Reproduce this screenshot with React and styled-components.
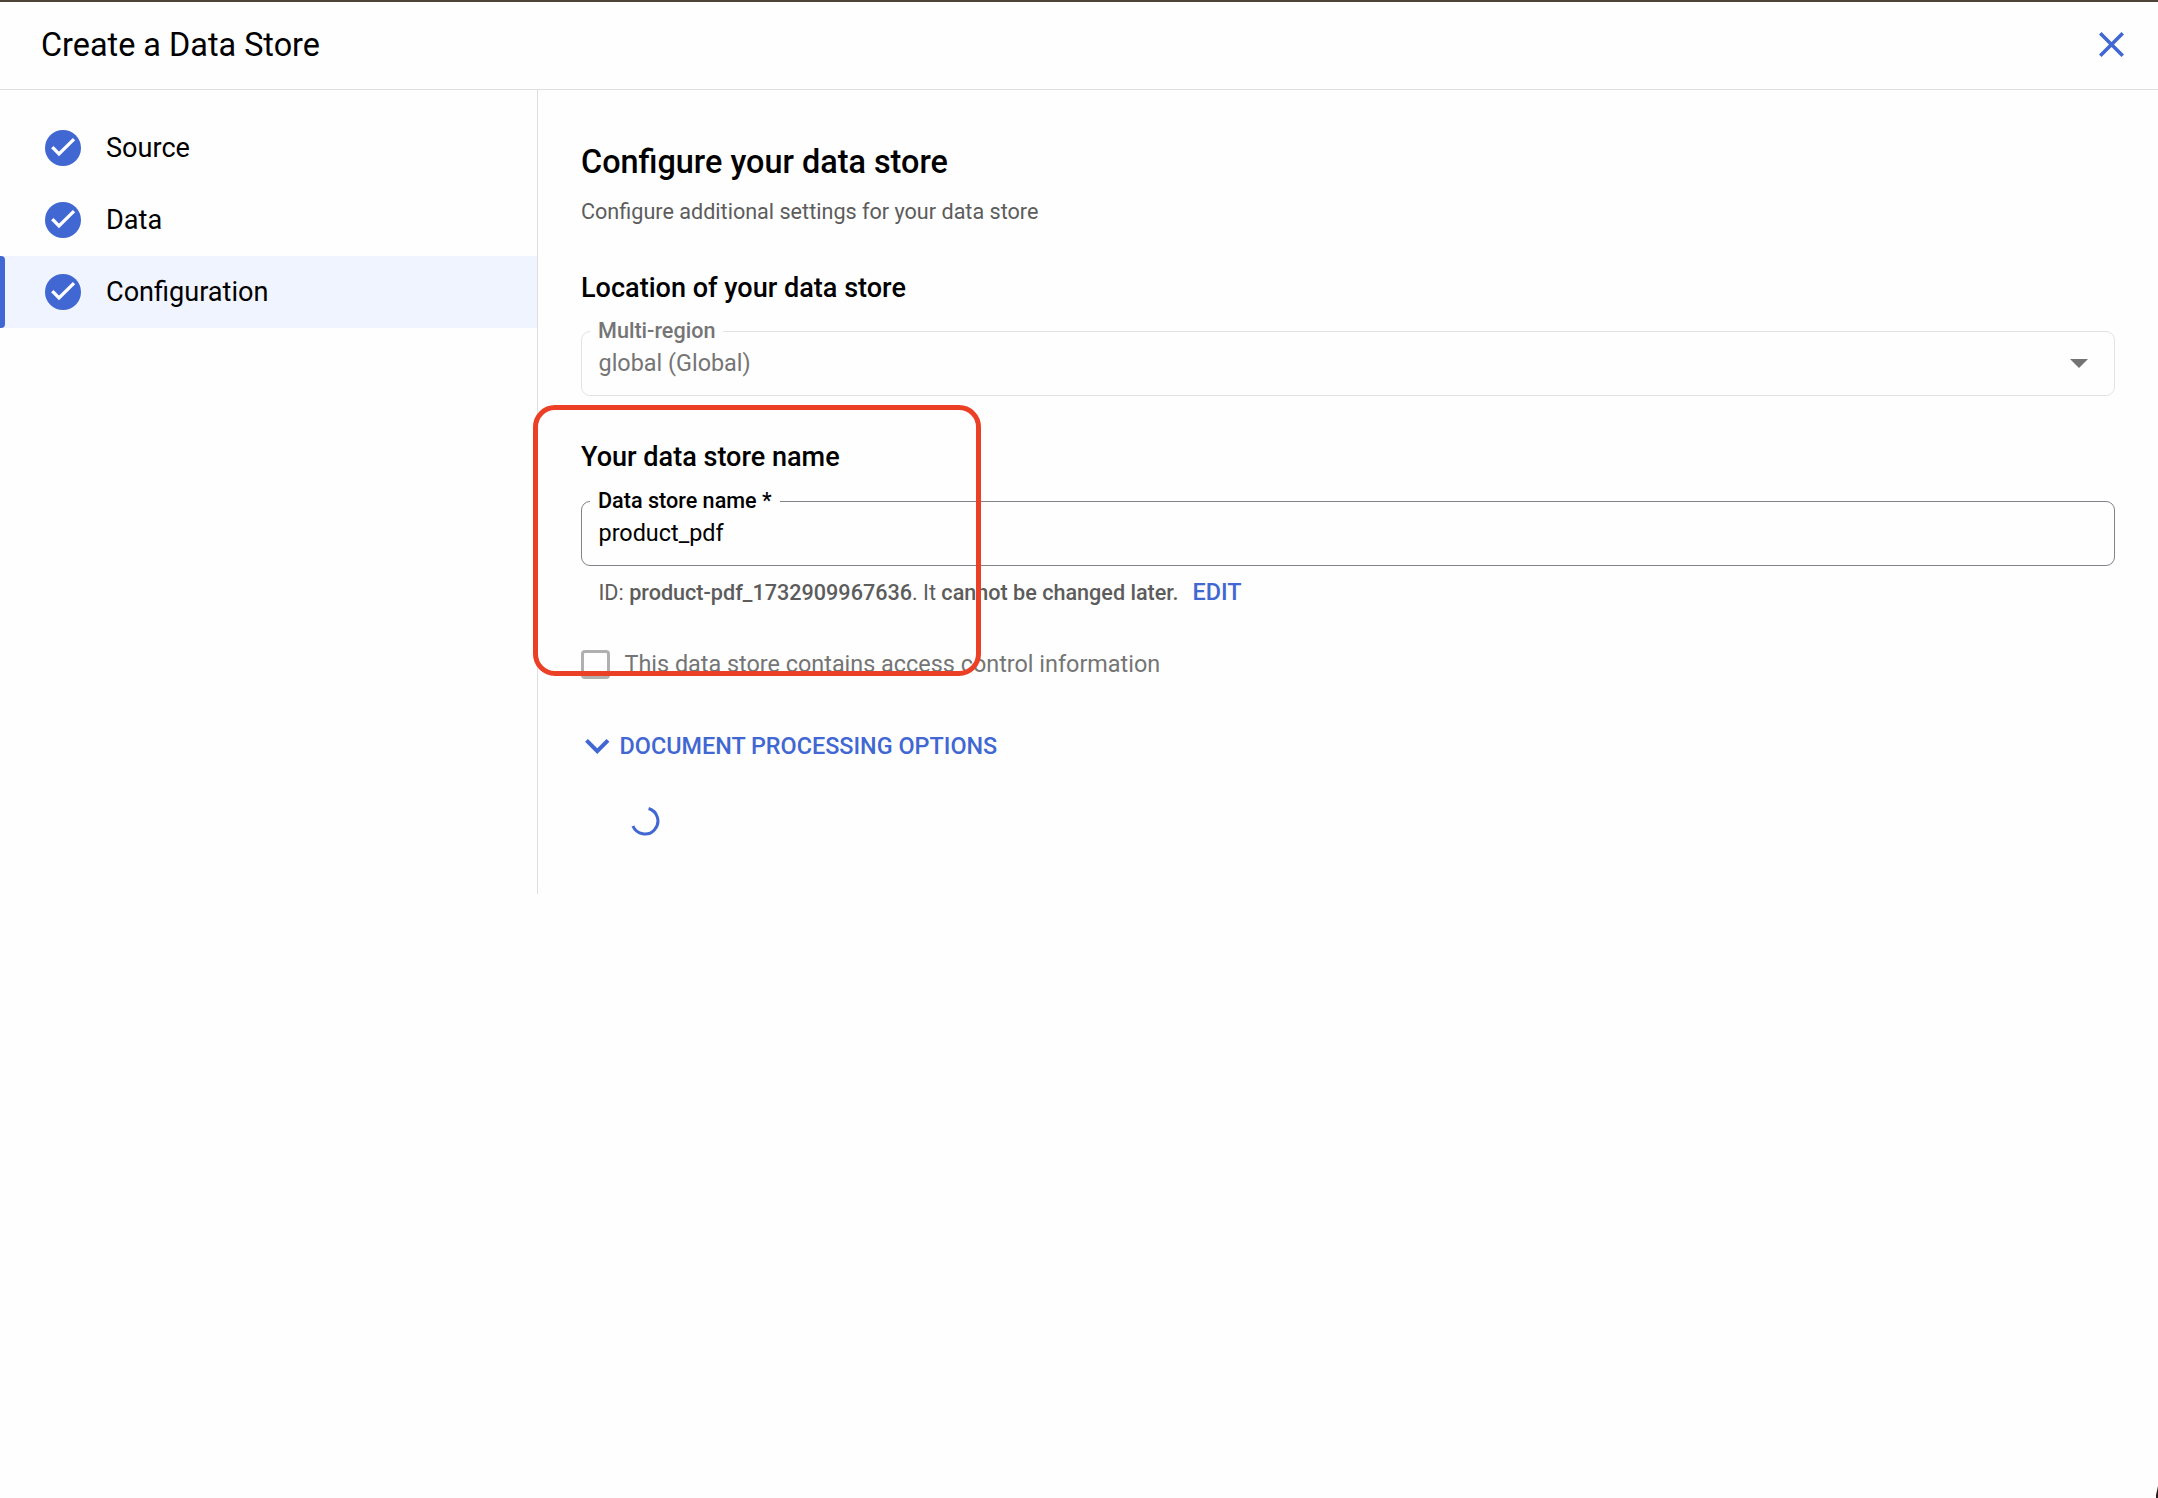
import React from "react";
import styled, { createGlobalStyle, css } from "styled-components";

const color = {
  page: "#fefefe",
  blue: "#4067d2",
  selected: "#f0f4fe",
  line: "#dedede",
  text: "#000",
  muted: "#5c5c5c",
  disabled: "#757575",
  frame: "#4f443a",
  highlight: "#eb4026",
};

const GlobalStyle = createGlobalStyle`
  *, *::before, *::after { box-sizing: border-box; }
  body {
    margin: 0;
    background: ${color.page};
    color: ${color.text};
    font-family: Roboto, "Liberation Sans", sans-serif;
  }
  h1, h2, h3, p { margin: 0; }
  svg { display: block; flex: none; }
`;

const Page = styled.div`
  position: relative;
  height: 1498px;
  overflow: hidden;
  border-top: 2px solid ${color.frame};
`;

const Header = styled.header`
  display: flex;
  align-items: center;
  justify-content: space-between;
  height: 88px;
  padding: 0 34px 2px 41px;
  border-bottom: 1px solid ${color.line};
`;

const Title = styled.h1`
  padding-top: 2px;
  font-size: 32.4px;
  font-weight: 400;
  line-height: 41px;
`;

const IconButton = styled.button`
  padding: 0;
  border: 0;
  background: none;
  color: ${color.blue};
`;

const Body = styled.div`
  display: flex;
  height: 804px;
`;

const Sidebar = styled.nav`
  flex: none;
  width: 538px;
  padding-top: 22px;
  border-right: 1px solid ${color.line};
`;

const Step = styled.a`
  display: flex;
  align-items: center;
  gap: 25px;
  height: 72px;
  padding-left: 45px;
  font-size: 27.1px;
  line-height: 36px;
  ${(p) =>
    p.$active &&
    css`
      position: relative;
      background: ${color.selected};
      &::before {
        content: "";
        position: absolute;
        inset: 0 auto 0 0;
        width: 5px;
        border-radius: 0 4px 4px 0;
        background: ${color.blue};
      }
    `}
`;

const Main = styled.main`
  flex: 1;
  display: flex;
  flex-direction: column;
  padding: 52px 43px 0;
`;

const Heading = styled.h2`
  font-size: 32.4px;
  font-weight: 500;
  line-height: 40px;
`;

const Subtitle = styled.p`
  margin-top: 15px;
  font-size: 21.6px;
  line-height: 30px;
  color: ${color.muted};
`;

const SectionTitle = styled.h3`
  margin-top: 45px;
  font-size: 27.05px;
  font-weight: 500;
  line-height: 32px;
`;

const Field = styled.div`
  position: relative;
  display: flex;
  align-items: center;
  justify-content: space-between;
  height: 65px;
  margin-top: ${(p) => (p.$disabled ? 27 : 28)}px;
  padding: 0 26px 1px 16.5px;
  border: 1px solid ${(p) => (p.$disabled ? "#e3e3e5" : "#808387")};
  border-radius: 9px;
  color: ${(p) => (p.$disabled ? color.disabled : color.text)};
  font-size: 23.4px;
  line-height: 30px;
`;

const FieldLabel = styled.label`
  position: absolute;
  top: -14px;
  left: 8px;
  padding: 0 8px;
  background: ${color.page};
  font-size: 21.6px;
  font-weight: 500;
  line-height: 26px;
`;

const Hint = styled.div`
  display: flex;
  align-items: baseline;
  gap: 14px;
  height: 31px;
  margin-top: 11px;
  padding-left: 17.5px;
  color: ${color.muted};
  font-size: 21.6px;
  line-height: 30px;
  b { font-weight: 500; }
`;

const LinkButton = styled.button`
  padding: 0;
  border: 0;
  background: none;
  color: ${color.blue};
  font: 500 23.4px/30px Roboto, "Liberation Sans", sans-serif;
`;

const CheckRow = styled.label`
  display: flex;
  gap: 14.5px;
  margin-top: 42px;
  color: ${color.disabled};
  font-size: 23.4px;
  line-height: 28px;
`;

const Box = styled.span`
  width: 29px;
  height: 29px;
  border: 3px solid #b0b0b0;
  border-radius: 4px;
`;

const Expander = styled.div`
  display: flex;
  align-items: center;
  gap: 10px;
  margin-top: 52px;
  padding-left: 4px;
  color: ${color.blue};
`;

const SpinnerSlot = styled.div`
  margin-top: 45px;
  padding-left: 49.3px;
  color: ${color.blue};
`;

const Highlight = styled.div`
  position: absolute;
  left: 533px;
  top: 403px;
  width: 448px;
  height: 271px;
  border: 5px solid ${color.highlight};
  border-radius: 22px;
`;

const Corner = styled.svg`
  position: absolute;
  right: 0;
  bottom: 0;
`;

const CheckCircle = () => (
  <svg width="36" height="36" viewBox="0 0 36 36">
    <circle cx="18" cy="18" r="18" fill={color.blue} />
    <path d="M7.3 17.2 14 24 29 9.2" fill="none" stroke="#fff" strokeWidth="3.3" />
  </svg>
);

const CloseIcon = () => (
  <svg width="25" height="25" viewBox="5 5 14 14" fill="currentColor">
    <path d="M19 6.41 17.59 5 12 10.59 6.41 5 5 6.41 10.59 12 5 17.59 6.41 19 12 13.41 17.59 19 19 17.59 13.41 12z" />
  </svg>
);

const CaretIcon = () => (
  <svg width="18" height="9" viewBox="0 0 18 9" fill="#737373">
    <path d="M0 0h18L9 9z" />
  </svg>
);

const ChevronIcon = () => (
  <svg width="24.5" height="15" viewBox="6 8.59 12 7.41" fill="currentColor">
    <path d="M16.59 8.59 12 13.17 7.41 8.59 6 10l6 6 6-6z" />
  </svg>
);

const Spinner = () => (
  <svg width="30" height="30" viewBox="-15 -15 30 30">
    <path d="M3.6-12.5A13 13 0 1 1-12.1 5" fill="none" stroke="currentColor" strokeWidth="3" />
  </svg>
);

const steps = ["Source", "Data", "Configuration"];

export default function App() {
  return (
    <Page>
      <GlobalStyle />
      <Header>
        <Title>Create a Data Store</Title>
        <IconButton aria-label="Close">
          <CloseIcon />
        </IconButton>
      </Header>
      <Body>
        <Sidebar>
          {steps.map((name) => (
            <Step key={name} $active={name === "Configuration"}>
              <CheckCircle />
              {name}
            </Step>
          ))}
        </Sidebar>
        <Main>
          <Heading>Configure your data store</Heading>
          <Subtitle>Configure additional settings for your data store</Subtitle>

          <SectionTitle>Location of your data store</SectionTitle>
          <Field $disabled>
            <FieldLabel>Multi-region</FieldLabel>
            global (Global)
            <CaretIcon />
          </Field>

          <SectionTitle>Your data store name</SectionTitle>
          <Field>
            <FieldLabel>Data store name *</FieldLabel>
            product_pdf
          </Field>
          <Hint>
            <span>
              ID: <b>product-pdf_1732909967636</b>. It <b>cannot be changed later.</b>
            </span>
            <LinkButton>EDIT</LinkButton>
          </Hint>

          <CheckRow>
            <Box />
            This data store contains access control information
          </CheckRow>

          <Expander>
            <ChevronIcon />
            <LinkButton>DOCUMENT PROCESSING OPTIONS</LinkButton>
          </Expander>
          <SpinnerSlot>
            <Spinner />
          </SpinnerSlot>
        </Main>
      </Body>
      <Highlight />
      <Corner width="2" height="12" viewBox="0 0 2 12">
        <path d="M2 0v12H0V9z" fill="#2a1d1c" />
      </Corner>
    </Page>
  );
}
